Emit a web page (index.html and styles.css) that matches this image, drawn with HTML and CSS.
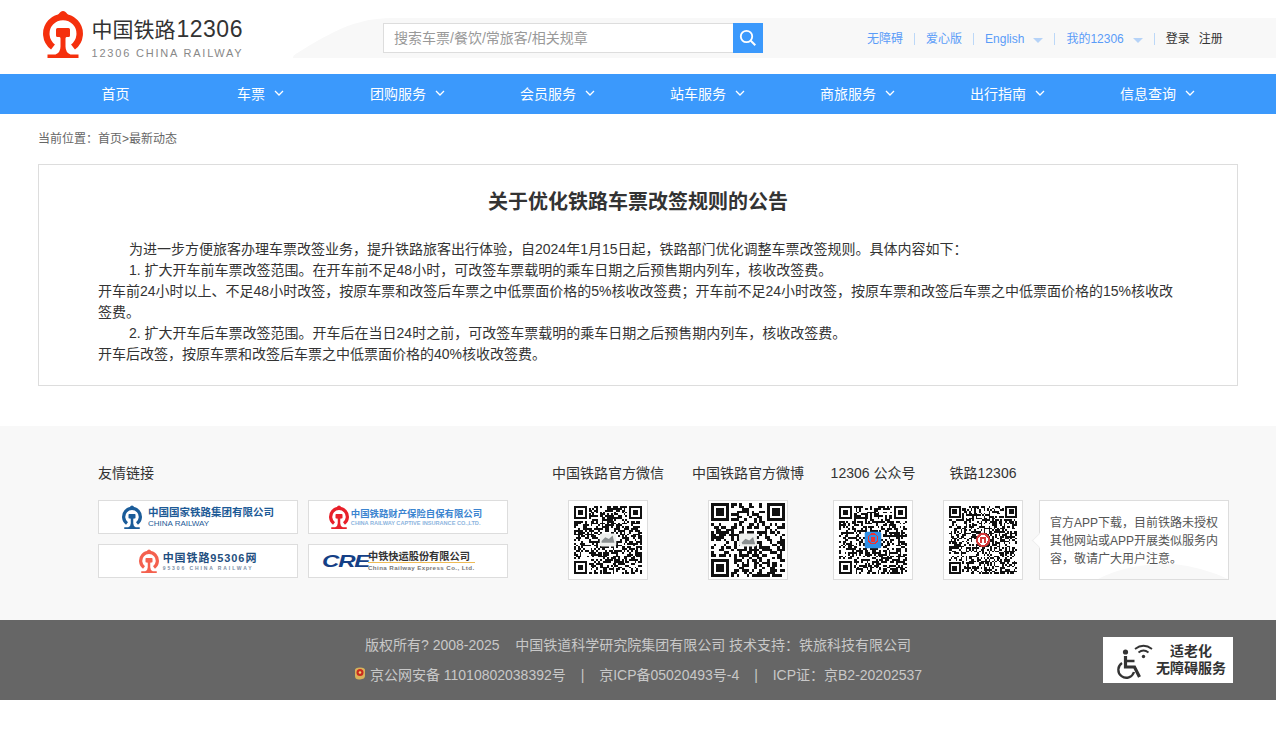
FILE: index.html
```html
<!DOCTYPE html>
<html lang="zh-CN">
<head>
<meta charset="utf-8">
<title>关于优化铁路车票改签规则的公告</title>
<link rel="stylesheet" href="styles.css">
</head>
<body>
<svg class="defs" width="0" height="0" aria-hidden="true">
  <symbol id="rail" viewBox="0 0 40 48">
    <path d="M10 37A16.7 16.7 0 1 1 30 37" fill="none" stroke="currentColor" stroke-width="6.5"/>
    <path d="M15 5Q20 -3 25 5Z" fill="currentColor"/>
    <path fill="currentColor" d="M13 19.500q0-1.500 1.500-1.500h11q1.500 0 1.500 1.500v6q0 1.500-1.500 1.500h-2q-1 0-1 1.500v8q0 6 5 8h8v4h-31v-4h8q5-2 5-8v-8q0-1.500-1-1.500h-2q-1.500 0-1.500-1.500z"/>
  </symbol>
</svg>

<header class="top">
  <a class="brand" href="#">
    <svg class="brand-icon"><use href="#rail"/></svg>
    <span class="brand-text">
      <span class="brand-cn">中国铁路<span class="brand-num">12306</span></span>
      <span class="brand-en">12306 CHINA RAILWAY</span>
    </span>
  </a>
  <div class="band">
    <form class="search">
      <input class="search-input" type="text" placeholder="搜索车票/餐饮/常旅客/相关规章">
      <button class="search-btn" type="button" aria-label="搜索">
        <svg width="18" height="18" viewBox="0 0 18 18"><circle cx="7.500" cy="7.500" r="5.700" fill="none" stroke="#fff" stroke-width="1.800"/><path d="M11.800 11.800l4.500 4.500" stroke="#fff" stroke-width="2"/></svg>
      </button>
    </form>
    <nav class="util">
      <a class="util-link" href="#">无障碍</a><i class="sep"></i>
      <a class="util-link" href="#">爱心版</a><i class="sep"></i>
      <a class="util-link" href="#">English<b class="tri"></b></a><i class="sep"></i>
      <a class="util-link" href="#">我的12306<b class="tri"></b></a><i class="sep"></i>
      <a class="util-dark" href="#">登录</a>
      <a class="util-dark" href="#">注册</a>
    </nav>
  </div>
</header>

<nav class="mainnav">
  <a class="nav-item" href="#">首页</a>
  <a class="nav-item nav-short" href="#">车票<svg class="chev" viewBox="0 0 10 6"><path d="M1 1l4 4 4-4"/></svg></a>
  <a class="nav-item nav-sub" href="#">团购服务<svg class="chev" viewBox="0 0 10 6"><path d="M1 1l4 4 4-4"/></svg></a>
  <a class="nav-item nav-sub" href="#">会员服务<svg class="chev" viewBox="0 0 10 6"><path d="M1 1l4 4 4-4"/></svg></a>
  <a class="nav-item nav-sub" href="#">站车服务<svg class="chev" viewBox="0 0 10 6"><path d="M1 1l4 4 4-4"/></svg></a>
  <a class="nav-item nav-sub" href="#">商旅服务<svg class="chev" viewBox="0 0 10 6"><path d="M1 1l4 4 4-4"/></svg></a>
  <a class="nav-item nav-sub" href="#">出行指南<svg class="chev" viewBox="0 0 10 6"><path d="M1 1l4 4 4-4"/></svg></a>
  <a class="nav-item nav-sub" href="#">信息查询<svg class="chev" viewBox="0 0 10 6"><path d="M1 1l4 4 4-4"/></svg></a>
</nav>

<main class="page">
  <div class="crumb">当前位置：首页&gt;最新动态</div>
  <article class="notice">
    <h1 class="notice-title">关于优化铁路车票改签规则的公告</h1>
    <p class="para indent">为进一步方便旅客办理车票改签业务，提升铁路旅客出行体验，自2024年1月15日起，铁路部门优化调整车票改签规则。具体内容如下：</p>
    <p class="para indent">1. 扩大开车前车票改签范围。在开车前不足48小时，可改签车票载明的乘车日期之后预售期内列车，核收改签费。</p>
    <p class="para">开车前24小时以上、不足48小时改签，按原车票和改签后车票之中低票面价格的5%核收改签费；开车前不足24小时改签，按原车票和改签后车票之中低票面价格的15%核收改签费。</p>
    <p class="para indent">2. 扩大开车后车票改签范围。开车后在当日24时之前，可改签车票载明的乘车日期之后预售期内列车，核收改签费。</p>
    <p class="para">开车后改签，按原车票和改签后车票之中低票面价格的40%核收改签费。</p>
  </article>
</main>

<section class="foot-top">
  <div class="friends">
    <h2 class="foot-h">友情链接</h2>
    <div class="friend-grid">
      <a class="friend" href="#">
        <svg class="f-icon f-icon-blue"><use href="#rail"/></svg>
        <span class="f-text"><span class="f1-cn">中国国家铁路集团有限公司</span><span class="f1-en">CHINA RAILWAY</span></span>
      </a>
      <a class="friend friend-insure" href="#">
        <svg class="f-icon f-icon-red"><use href="#rail"/></svg>
        <span class="f-text"><span class="f2-cn">中国铁路财产保险自保有限公司</span><span class="f2-en">CHINA RAILWAY CAPTIVE INSURANCE CO.,LTD.</span></span>
      </a>
      <a class="friend" href="#">
        <svg class="f-icon f-icon-orange"><use href="#rail"/></svg>
        <span class="f-text"><span class="f3-cn">中国铁路95306网</span><span class="f3-en">95306 CHINA RAILWAY</span></span>
      </a>
      <a class="friend friend-cre" href="#">
        <span class="cre">CRE</span>
        <span class="f-text"><span class="f4-cn">中铁快运股份有限公司</span><span class="f4-en">China Railway Express Co., Ltd.</span></span>
      </a>
    </div>
  </div>
  <div class="qr-col qr-wide">
    <h2 class="foot-h">中国铁路官方微信</h2>
    <div class="qr-box"><svg class="qr qr-68" data-n="37" data-seed="11" viewBox="0 0 37 37"><path class="qr-mod"/><rect class="qr-logo-bg" x="14" y="15" width="9" height="7" rx="1"/><path class="qr-pic" d="M15 19l2-2 2 1 2-2 1 4h-7z"/></svg></div>
  </div>
  <div class="qr-col qr-wide">
    <h2 class="foot-h">中国铁路官方微博</h2>
    <div class="qr-box"><svg class="qr qr-74" data-n="29" data-seed="27" viewBox="0 0 29 29"><path class="qr-mod"/><rect class="qr-logo-bg" x="11" y="12" width="7" height="5" rx=".8"/><path class="qr-pic" d="M12 15.500l1.500-1.500 1.500 .7 1.500-1.400 .8 2.900h-5z"/></svg></div>
  </div>
  <div class="qr-col qr-mid">
    <h2 class="foot-h">12306 公众号</h2>
    <div class="qr-box"><svg class="qr qr-68" data-n="37" data-seed="43" viewBox="0 0 37 37"><path class="qr-mod"/><rect class="qr-blue" x="14" y="14" width="9" height="9" rx="1"/><circle cx="18.500" cy="17.800" r="2.600" fill="none" stroke="#e33" stroke-width=".8"/><rect class="qr-red" x="17.500" y="17" width="2" height="2.600"/></svg></div>
  </div>
  <div class="qr-col qr-narrow">
    <h2 class="foot-h">铁路12306</h2>
    <div class="qr-box"><svg class="qr qr-68" data-n="41" data-seed="59" viewBox="0 0 41 41"><path class="qr-mod"/><circle class="qr-ring" cx="20.500" cy="20.500" r="4.300"/><circle cx="20.500" cy="20.500" r="2.500" fill="none" stroke="#fff" stroke-width=".8"/><rect class="qr-white" x="19.800" y="19.600" width="1.400" height="3"/></svg></div>
  </div>
  <div class="app-note">
    <svg class="train" viewBox="0 0 130 16"><path d="M0 16Q25 3 60 1h16q28 3 54 15z"/></svg>
    <p class="app-text">官方APP下载，目前铁路未授权其他网站或APP开展类似服务内容，敬请广大用户注意。</p>
  </div>
</section>

<footer class="foot-bar">
  <div class="foot-lines">
    <p class="foot-line">版权所有? 2008-2025 &nbsp;&nbsp; 中国铁道科学研究院集团有限公司 技术支持：铁旅科技有限公司</p>
    <p class="foot-line">
      <svg class="emblem" viewBox="0 0 12 13"><path fill="#d8b25a" d="M1 3Q1 .5 6 .5T11 3V9Q11 12 6 12.500T1 9z"/><circle cx="6" cy="5.500" r="3.500" fill="#c92a1e"/><circle cx="6" cy="5.500" r="1.300" fill="#f2d26b"/></svg>京公网安备 11010802038392号 <span class="bar">|</span> 京ICP备05020493号-4 <span class="bar">|</span> ICP证：京B2-20202537
    </p>
  </div>
  <a class="elder" href="#">
    <svg class="elder-icon" width="44" height="40" viewBox="0 0 44 40">
      <circle cx="9.500" cy="10" r="2.600" fill="#333"/>
      <path d="M9.500 14v11h9l5 10" fill="none" stroke="#333" stroke-width="3.200"/>
      <path d="M9.500 19h9" fill="none" stroke="#333" stroke-width="2.500"/>
      <path d="M6 21a8 8 0 1 0 12 9" fill="none" stroke="#333" stroke-width="2.300"/>
      <path d="M19 7q8.500-6.500 17 0M22.500 10.500q5-4 10 0" fill="none" stroke="#333" stroke-width="1.800"/>
      <circle cx="27.500" cy="14.500" r="1.700" fill="#333"/>
    </svg>
    <span class="elder-text"><span>适老化</span><span>无障碍服务</span></span>
  </a>
</footer>
<div class="tail"></div>
<script src="qr.js"></script>
</body>
</html>
```

FILE: styles.css
```css
* { box-sizing: border-box; }
html, body { margin: 0; padding: 0; }
body {
  font-family: "Liberation Sans", "Noto Sans CJK SC", sans-serif;
  font-size: 14px;
  color: #333;
  background: #fff;
  overflow: hidden;
}
a { color: inherit; text-decoration: none; }
p, h1, h2 { margin: 0; }
.defs { display: block; height: 0; }

/* header */
.top { display: flex; height: 74px; }
.brand { display: flex; width: 293px; padding: 10px 0 0 43px; }
.brand-icon { width: 40px; height: 48px; color: #f5300d; flex: none; }
.brand-text { display: flex; flex-direction: column; margin-left: 8.500px; }
.brand-cn { font-size: 21px; line-height: 30px; margin-top: 4px; color: #333; white-space: nowrap; }
.brand-num { font-size: 23px; margin-left: 1px; letter-spacing: .5px; }
.brand-en { font-size: 11px; line-height: 14px; margin-top: 1px; color: #888; letter-spacing: 1.800px; white-space: nowrap; }
.band {
  flex: 1;
  height: 40px;
  margin-top: 18px;
  padding: 5px 0 0 90px;
  display: flex;
  background: #f8f8f8;
  clip-path: path("M0 40C0 37 3 36 6 34C30 19 50 8 68 4C78 1 90 0 100 0L983 0L983 40Z");
}
.search { display: flex; height: 30px; width: 380px; }
.search-input {
  width: 350px;
  height: 30px;
  border: 1px solid #ddd;
  border-right: 0;
  padding: 0 10px;
  font: 14px "Liberation Sans", "Noto Sans CJK SC", sans-serif;
  color: #333;
  background: #fff;
  outline: 0;
}
.search-input::placeholder { color: #999; opacity: 1; }
.search-btn {
  width: 30px;
  height: 30px;
  border: 0;
  padding: 0;
  background: #3b99fc;
  display: flex;
  align-items: center;
  justify-content: center;
}
.util { display: flex; align-items: center; height: 30px; margin-left: 104px; font-size: 12px; line-height: 16px; white-space: nowrap; }
.util-link { color: #5a9cf8; display: flex; align-items: center; height: 16px; margin-top: 2px; }
.util-dark { color: #333; margin-right: 9px; height: 16px; margin-top: 2px; }
.sep { width: 1px; height: 12px; background: #bcd8f8; margin: 2px 11px 0; }
.tri {
  width: 0;
  height: 0;
  margin-left: 9px;
  margin-top: 3px;
  border-left: 5px solid transparent;
  border-right: 5px solid transparent;
  border-top: 5px solid #b6d3f8;
}

/* nav */
.mainnav { display: flex; height: 40px; padding-left: 40px; background: #3b99fc; }
.nav-item {
  width: 150px;
  display: flex;
  align-items: center;
  justify-content: center;
  color: #fff;
  font-size: 14px;
  padding: 0 0 2px 1px;
}
.nav-short { padding-right: 14px; }
.nav-sub { padding-right: 20px; }
.chev { width: 10px; height: 6px; margin-left: 9px; margin-right: -4px; fill: none; stroke: #fff; stroke-width: 1.300; }

/* content */
.page { padding: 0 38px; height: 312px; }
.crumb { height: 50px; padding-top: 17px; font-size: 12px; line-height: 16px; color: #666; }
.notice { border: 1px solid #ddd; height: 222px; padding: 0 59px; }
.notice-title { font-size: 20px; line-height: 28px; padding-top: 23px; height: 74px; text-align: center; font-weight: 700; color: #333; }
.para { font-size: 14px; line-height: 21px; color: #333; }
.indent { text-indent: 31px; }

/* footer top */
.foot-top { height: 194px; background: #f8f8f8; padding: 37px 0 0 98px; display: flex; }
.friends { width: 454px; flex: none; }
.foot-h { font-size: 14px; line-height: 20px; font-weight: 400; color: #333; height: 37px; white-space: nowrap; }
.friend-grid { display: grid; grid-template-columns: 200px 200px; grid-auto-rows: 34px; gap: 10px; }
.friend { background: #fff; border: 1px solid #ddd; display: flex; align-items: center; justify-content: center; }
.friend-insure { padding-right: 5px; }
.friend-cre { justify-content: flex-start; padding-left: 13px; }
.f-icon { flex: none; }
.f-icon-blue { width: 20px; height: 24px; color: #1b5c99; margin-right: 6px; }
.f-icon-red { width: 20px; height: 24px; color: #e8202a; margin-right: 2px; }
.f-icon-orange { width: 20px; height: 24px; color: #f4604e; margin-right: 4px; }
.f-text { display: flex; flex-direction: column; white-space: nowrap; }
.f1-cn { font-size: 10.500px; line-height: 14px; font-weight: 700; color: #1d5a96; }
.f1-en { font-size: 8px; line-height: 10px; color: #1d5a96; }
.f2-cn { font-size: 9.400px; line-height: 13px; font-weight: 700; color: #3b84d0; }
.f2-en { font-size: 5.600px; line-height: 7px; font-weight: 700; color: #8db4de; }
.f3-cn { font-size: 11px; line-height: 14px; font-weight: 700; color: #1f4f80; letter-spacing: .9px; }
.f3-en { font-size: 5px; line-height: 7px; font-weight: 700; color: #7b8fa6; letter-spacing: 1.900px; }
.cre { display: block; font-size: 20px; line-height: 24px; font-style: italic; font-weight: 700; color: #143f86; letter-spacing: -1px; width: 46px; transform: scale(1.200, .8); transform-origin: left center; }
.f4-cn { font-size: 10.200px; line-height: 11px; font-weight: 700; color: #333; border-bottom: 1px solid #eebb55; }
.f4-en { font-size: 6.200px; line-height: 9px; font-weight: 700; color: #777; letter-spacing: .4px; }

.qr-col { flex: none; margin-right: 28px; display: flex; flex-direction: column; align-items: center; }
.qr-wide { width: 112px; }
.qr-mid { width: 82px; margin-right: 29px; }
.qr-narrow { width: 80px; margin-right: 16px; }
.qr-box { width: 80px; height: 80px; background: #fff; border: 1px solid #ddd; display: flex; align-items: center; justify-content: center; flex: none; }
.qr { display: block; shape-rendering: crispEdges; }
.qr-68 { width: 68px; height: 68px; }
.qr-74 { width: 74px; height: 74px; }
.qr-mod { fill: #111; }
.qr-logo-bg { fill: #eef0ee; shape-rendering: auto; }
.qr-pic { fill: #8a8f90; shape-rendering: auto; }
.qr-blue { fill: #2f8fe6; shape-rendering: auto; }
.qr-red { fill: #e33; }
.qr-ring { fill: #d63a3a; shape-rendering: auto; }
.qr-white { fill: #fff; }

.app-note { position: relative; width: 190px; height: 80px; margin-top: 37px; background: #fff; border: 1px solid #ddd; padding: 13px 9px 0 10px; }
.app-note::before {
  content: "";
  position: absolute;
  left: -6px;
  top: 34px;
  width: 10px;
  height: 10px;
  background: #fff;
  border-left: 1px solid #eee;
  border-bottom: 1px solid #eee;
  transform: rotate(45deg);
}
.train { position: absolute; right: 0; bottom: 0; width: 130px; height: 16px; fill: #f8f8f8; }
.app-text { position: relative; font-size: 12px; line-height: 18px; color: #555; }

/* footer bar */
.foot-bar { height: 80px; background: #666; display: grid; grid-template-columns: 1fr auto 1fr; }
.foot-lines { grid-column: 2; padding-top: 10px; text-align: center; }
.foot-line { font-size: 14px; line-height: 30px; color: #c8c8c8; white-space: nowrap; }
.bar { margin: 0 11px; }
.emblem { width: 12px; height: 13px; margin-right: 4px; vertical-align: 0; }
.elder {
  grid-column: 3;
  justify-self: end;
  align-self: start;
  margin: 17px 43px 0 0;
  width: 130px;
  height: 46px;
  background: #fff;
  display: flex;
  align-items: center;
  padding-left: 13px;
}
.elder-icon { flex: none; margin-top: 3px; }
.elder-text { display: flex; flex-direction: column; align-items: center; margin-left: -4px; font-size: 14px; line-height: 17px; font-weight: 700; color: #333; white-space: nowrap; }
.tail { height: 36px; }
```

FILE: qr.js
```js
// Draws the module pattern of each QR code from its size and seed.
document.querySelectorAll('.qr').forEach(function (svg) {
  var n = +svg.dataset.n;
  var s = +svg.dataset.seed * 2654435761 >>> 0;
  function rnd() {
    s ^= s << 13; s >>>= 0;
    s ^= s >>> 17;
    s ^= s << 5; s >>>= 0;
    return s / 4294967296;
  }
  var d = '';
  function box(x, y, w, h) { d += 'M' + x + ' ' + y + 'h' + w + 'v' + h + 'h' + (-w) + 'z'; }
  function finder(x, y) {
    box(x, y, 7, 1); box(x, y + 6, 7, 1); box(x, y + 1, 1, 5); box(x + 6, y + 1, 1, 5);
    box(x + 2, y + 2, 3, 3);
  }
  function reserved(x, y) {
    return (x < 8 && y < 8) || (x >= n - 8 && y < 8) || (x < 8 && y >= n - 8);
  }
  finder(0, 0); finder(n - 7, 0); finder(0, n - 7);
  for (var y = 0; y < n; y++) {
    for (var x = 0; x < n; x++) {
      if (!reserved(x, y) && rnd() < 0.5) box(x, y, 1, 1);
    }
  }
  svg.querySelector('.qr-mod').setAttribute('d', d);
});
```
